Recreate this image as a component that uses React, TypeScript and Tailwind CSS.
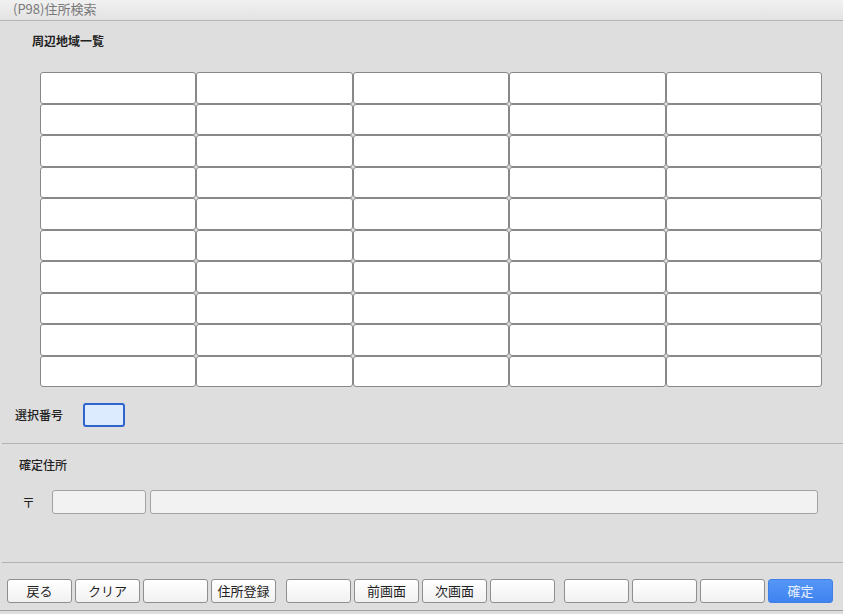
import React from "react";

const font = { fontFamily: '"Noto Sans CJK JP", "Noto Sans", sans-serif' };

function Btn({ label, primary }: { label?: string; primary?: boolean }) {
  return (
    <div
      className={
        primary
          ? "w-[65px] h-[24px] rounded-[3px] border border-[#3f7fe6] bg-gradient-to-b from-[#5596f6] to-[#3f83f0] text-[#e6efff] text-[13px] flex items-center justify-center"
          : "w-[65px] h-[24px] rounded-[3px] border border-[#8f8f8f] bg-gradient-to-b from-[#ffffff] to-[#f1f1f1] text-[#222] text-[13px] flex items-center justify-center"
      }
    >
      {label}
    </div>
  );
}

export default function App() {
  const rows = Array.from({ length: 10 });
  const cols = Array.from({ length: 5 });
  return (
    <div className="w-[843px] h-[614px] bg-[#dedede] overflow-hidden flex flex-col" style={font}>
      <div className="h-[21px] border-b border-[#b4b4b4] bg-gradient-to-b from-[#f1f1f1] to-[#e3e3e3] pl-[13px] flex items-start">
        <span className="text-[13px] leading-[17px] text-[#7a7a7a]">(P98)住所検索</span>
      </div>
      <div className="h-[51px] pt-[12px] pl-[32px] text-[12px] leading-[16px] font-bold text-[#222]">
        周辺地域一覧
      </div>
      <div className="ml-[40px] w-[782px] flex flex-col">
        {rows.map((_, r) => (
          <div key={r} className="flex h-[31.5px]">
            {cols.map((_, c) => (
              <div
                key={c}
                className="flex-1 bg-white border border-[#888888] rounded-[3px]"
              />
            ))}
          </div>
        ))}
      </div>
      <div className="mt-[16px] h-[24px] flex items-center">
        <div className="pl-[15px] w-[83px] text-[12px] font-medium text-[#222]">選択番号</div>
        <div className="w-[42px] h-[24px] rounded-[3px] border-2 border-[#2f64cf] bg-[#dcebfd]" />
      </div>
      <div className="mt-[16px] ml-[2px] h-px bg-[#b2b2b2]" />
      <div className="pt-[13px] pl-[19px] text-[12px] leading-[16px] font-medium text-[#222]">確定住所</div>
      <div className="mt-[17px] h-[24px] flex items-center">
        <div className="pl-[22px] w-[52px] text-[13px] text-[#222]">〒</div>
        <div className="w-[94px] h-[24px] rounded-[3px] border border-[#a3a3a3] bg-[#f2f2f2]" />
        <div className="ml-[4px] w-[668px] h-[24px] rounded-[3px] border border-[#a3a3a3] bg-[#f2f2f2]" />
      </div>
      <div className="mt-[48px] ml-[2px] h-px bg-[#b2b2b2]" />
      <div className="mt-[16px] pl-[7px] flex items-center gap-[10px]">
        <div className="flex gap-[3px]">
          <Btn label="戻る" />
          <Btn label="クリア" />
          <Btn />
          <Btn label="住所登録" />
        </div>
        <div className="flex gap-[3px]">
          <Btn />
          <Btn label="前画面" />
          <Btn label="次画面" />
          <Btn />
        </div>
        <div className="flex gap-[3px] ml-[-1px]">
          <Btn />
          <Btn />
          <Btn />
          <Btn label="確定" primary />
        </div>
      </div>
      <div className="mt-[7px] h-px bg-[#a0a0a0]" />
    </div>
  );
}
